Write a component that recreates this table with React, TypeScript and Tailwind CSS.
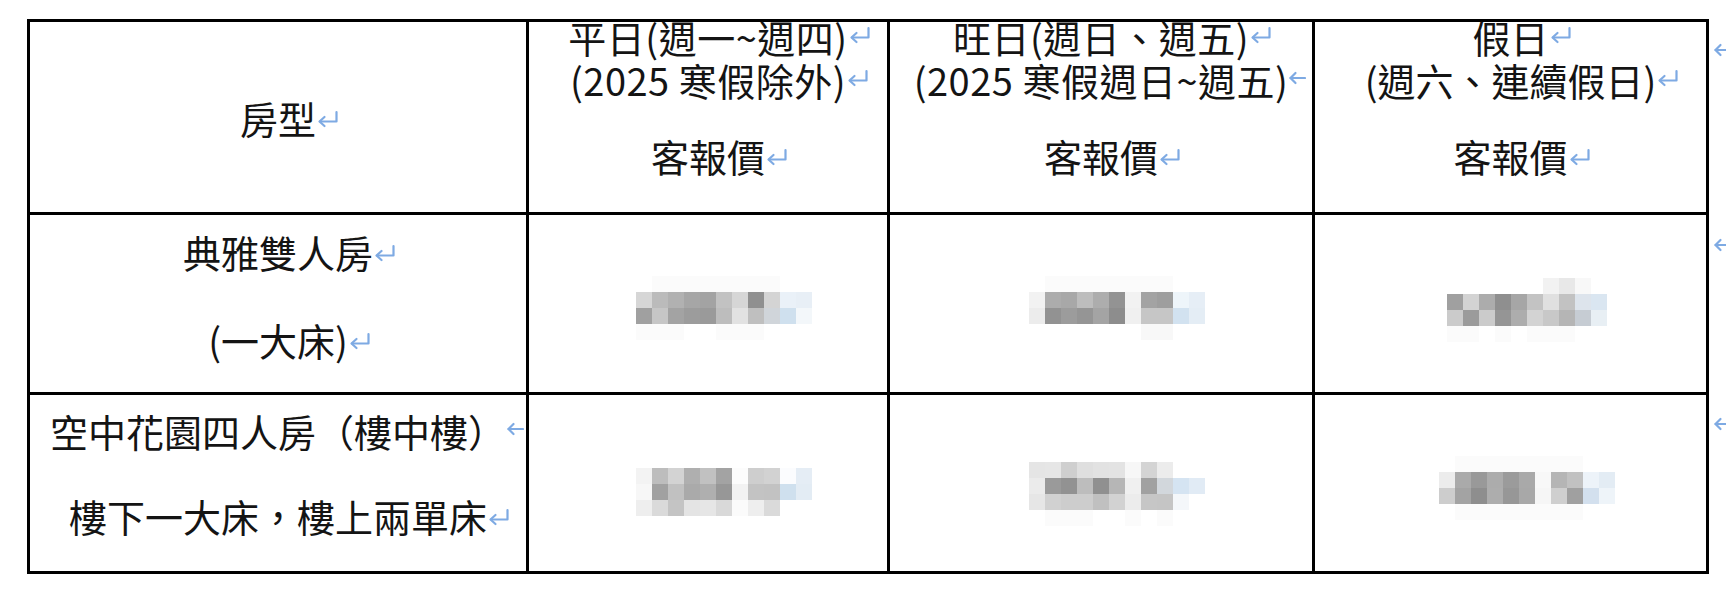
import React from "react";

const FONT = "font-['Noto_Sans_CJK_TC','Noto_Sans_CJK_SC',sans-serif]";

const Ret = ({ raise = "align-[5px]" }: { raise?: string }) => (
  <svg
    className={`inline-block w-[24px] h-[19px] -mr-[24px] ${raise}`}
    viewBox="0 0 24 19"
    fill="none"
    stroke="#7eaae3"
    strokeWidth="2.2"
    strokeLinecap="round"
    strokeLinejoin="round"
  >
    <path d="M20.5 2 V11.5 H4" />
    <path d="M8.5 7 L3.5 11.5 L8.5 16" />
  </svg>
);

const LeftArrow = ({ raise = "align-[8px]" }: { raise?: string }) => (
  <svg
    className={`inline-block w-[18px] h-[14px] -mr-[18px] ${raise}`}
    viewBox="0 0 18 14"
    fill="none"
    stroke="#7eaae3"
    strokeWidth="2.2"
    strokeLinecap="round"
    strokeLinejoin="round"
  >
    <path d="M17 7 H2.5" />
    <path d="M7.5 2 L2.5 7 L7.5 12" />
  </svg>
);

const Mosaic = ({ rows, shift }: { rows: string[][]; shift: string }) => (
  <div className={`flex flex-col ${shift}`}>
    {rows.map((r, i) => (
      <div key={i} className="flex">
        {r.map((c, j) => (
          <div key={j} className="w-4 h-4" style={{ backgroundColor: c }} />
        ))}
      </div>
    ))}
  </div>
);

const F = "#fbfbfb";
const W = "#ffffff";

const m11 = [
  [W, F, F, F, F, F, F, F, F, W, W],
  ["#d6d6d6", "#bbbbbb", "#b1b1b1", "#a6a6a6", "#a3a3a3", "#c2c2c2", "#d6d6d6", "#909090", "#d4d4d4", "#eaf1f8", "#e8eff6"],
  ["#a0a0a0", "#c6c6c6", "#a3a3a3", "#9c9c9c", "#9a9a9a", "#bdbdbd", "#e2e2e2", "#bfbfbf", "#d0d5da", "#cfe0ee", "#f3f7fa"],
  [F, F, F, W, W, F, F, F, W, W, W],
];
const m12 = [
  [W, F, F, F, F, F, F, F, F, W, W],
  ["#f2f2f2", "#acacac", "#a8a8a8", "#bdbdbd", "#adadad", "#939393", "#f2f2f2", "#a3a3a3", "#9e9e9e", "#eef5fa", "#e6eef6"],
  ["#ececec", "#929292", "#9c9c9c", "#959595", "#a4a4a4", "#8d8d8d", "#f0f0f0", "#c6c6c6", "#c6c6c6", "#d2e2f0", "#e4edf5"],
  [W, W, W, W, W, W, W, "#f8f8f8", "#f8f8f8", W, W],
];
const m13 = [
  [W, W, W, W, W, W, "#f2f2f2", "#e8e8e8", "#f8f8f8", W],
  ["#a0a0a0", "#d3d3d3", "#acacac", "#8f8f8f", "#a6a6a6", "#c3c3c3", "#e0e0e0", "#c2c2c2", "#dde4ec", "#dae6f1"],
  ["#cbcbcb", "#9b9b9b", "#cbcbcb", "#959595", "#adadad", "#d3d3d3", "#c8c8c8", "#b5b5b5", "#c6ccd3", "#e8eff4"],
  [F, F, W, F, W, F, F, F, W, W],
];
const m21 = [
  ["#f3f3f3", "#bdbdbd", "#d3d3d3", "#afafaf", "#c1c1c1", "#a3a3a3", "#fcfcfc", "#cecece", "#d2d2d2", "#fbfcfe", "#e5edf5"],
  ["#f7f7f7", "#a1a1a1", "#c1c1c1", "#aaaaaa", "#afafaf", "#979797", "#f2f2f2", "#c3c3c3", "#c2c2c2", "#cfe0ee", "#e3ecf4"],
  ["#eeeeee", "#dadada", "#c4c4c4", "#e4e4e4", "#e6e6e6", "#d9d9d9", "#fbfbfb", "#eeeeee", "#dadada", W, W],
];
const m22 = [
  ["#e5e5e5", "#e6e6e6", "#cfcfcf", "#dfdfdf", "#e2e2e2", "#e3e3e3", "#f7f7f7", "#d4d4d4", "#ececec", W, W],
  ["#ebebeb", "#9a9a9a", "#929292", "#bdbdbd", "#909090", "#b6b6b6", "#f0f0f0", "#a1a1a1", "#d2d7dc", "#d5e4f2", "#e1ebf5"],
  ["#e6e6e6", "#d1d1d1", "#cdcdcd", "#cdcdcd", "#c0c0c0", "#d2d2d2", "#ececec", "#c6c6c6", "#c5c5c5", "#f4f7fa", W],
  [W, F, F, F, W, W, F, W, F, W, W],
];
const m23 = [
  [W, F, F, F, F, F, F, F, F, W, W],
  ["#ececec", "#aaaaaa", "#999999", "#acacac", "#9b9b9b", "#a9a9a9", "#f8f8f8", "#b5b5b5", "#c1c1c1", "#edf3f9", "#e3ecf4"],
  ["#cdcdcd", "#a3a3a3", "#8e8e8e", "#adadad", "#979797", "#a8a8a8", "#f6f6f6", "#cfcfcf", "#a0a0a0", "#d3e0ee", "#eef4f9"],
  [W, F, F, F, F, F, F, F, F, W, W],
];

export default function App() {
  return (
    <div className={`min-h-[602px] w-full bg-white pt-[19px] pl-[27px] text-[#141414] ${FONT}`}>
      <div className="grid grid-cols-[502px_361px_425px_394px_17px] grid-rows-[196px_180px_179px] text-[38px] leading-[43px]">
        {/* Header row */}
        <div className="flex items-center justify-center border-[3px] border-black">
          <p className="whitespace-nowrap">
            房型
            <Ret />
          </p>
        </div>
        <div className="flex flex-col items-center border-t-[3px] border-r-[3px] border-b-[3px] border-black">
          <div className="-mt-[7px] flex flex-col items-center whitespace-nowrap tracking-[0.5px]">
            <p>
              平日(週一~週四)
              <Ret raise="align-[8px]" />
            </p>
            <p>
              (2025 寒假除外)
              <Ret raise="align-[8px]" />
            </p>
            <p className="mt-[33px] tracking-normal">
              客報價
              <Ret />
            </p>
          </div>
        </div>
        <div className="flex flex-col items-center border-t-[3px] border-r-[3px] border-b-[3px] border-black">
          <div className="-mt-[7px] flex flex-col items-center whitespace-nowrap tracking-[0.5px]">
            <p>
              旺日(週日、週五)
              <Ret raise="align-[8px]" />
            </p>
            <p>
              (2025 寒假週日~週五)
              <LeftArrow raise="align-[11px]" />
            </p>
            <p className="mt-[33px] tracking-normal">
              客報價
              <Ret />
            </p>
          </div>
        </div>
        <div className="flex flex-col items-center border-t-[3px] border-r-[3px] border-b-[3px] border-black">
          <div className="-mt-[7px] flex flex-col items-center whitespace-nowrap">
            <p>
              假日
              <Ret raise="align-[8px]" />
            </p>
            <p>
              (週六、連續假日)
              <Ret raise="align-[8px]" />
            </p>
            <p className="mt-[33px]">
              客報價
              <Ret />
            </p>
          </div>
        </div>
        <div className="pl-[4px] pt-[24px]">
          <LeftArrow raise="align-top" />
        </div>

        {/* Row 1 */}
        <div className="flex flex-col items-center border-x-[3px] border-b-[3px] border-black pt-[15px] whitespace-nowrap">
          <p>
            典雅雙人房
            <Ret />
          </p>
          <p className="mt-[45px]">
            (一大床)
            <Ret />
          </p>
        </div>
        <div className="flex justify-center border-r-[3px] border-b-[3px] border-black pt-[61px]">
          <Mosaic rows={m11} shift="ml-[32px]" />
        </div>
        <div className="flex justify-center border-r-[3px] border-b-[3px] border-black pt-[61px]">
          <Mosaic rows={m12} shift="ml-[32px]" />
        </div>
        <div className="flex justify-center border-r-[3px] border-b-[3px] border-black pt-[63px]">
          <Mosaic rows={m13} shift="ml-[32px]" />
        </div>
        <div className="pl-[4px] pt-[23px]">
          <LeftArrow raise="align-top" />
        </div>

        {/* Row 2 */}
        <div className="flex flex-col items-center overflow-hidden border-x-[3px] border-b-[3px] border-black pt-[14px] whitespace-nowrap">
          <p>
            空中花園四人房（樓中樓）
            <LeftArrow raise="align-[11px]" />
          </p>
          <p className="mt-[42px]">
            樓下一大床，樓上兩單床
            <Ret />
          </p>
        </div>
        <div className="flex justify-center border-r-[3px] border-b-[3px] border-black pt-[73px]">
          <Mosaic rows={m21} shift="ml-[32px]" />
        </div>
        <div className="flex justify-center border-r-[3px] border-b-[3px] border-black pt-[67px]">
          <Mosaic rows={m22} shift="ml-[32px]" />
        </div>
        <div className="flex justify-center border-r-[3px] border-b-[3px] border-black pt-[61px]">
          <Mosaic rows={m23} shift="ml-[32px]" />
        </div>
        <div className="pl-[4px] pt-[22px]">
          <LeftArrow raise="align-top" />
        </div>
      </div>
    </div>
  );
}
